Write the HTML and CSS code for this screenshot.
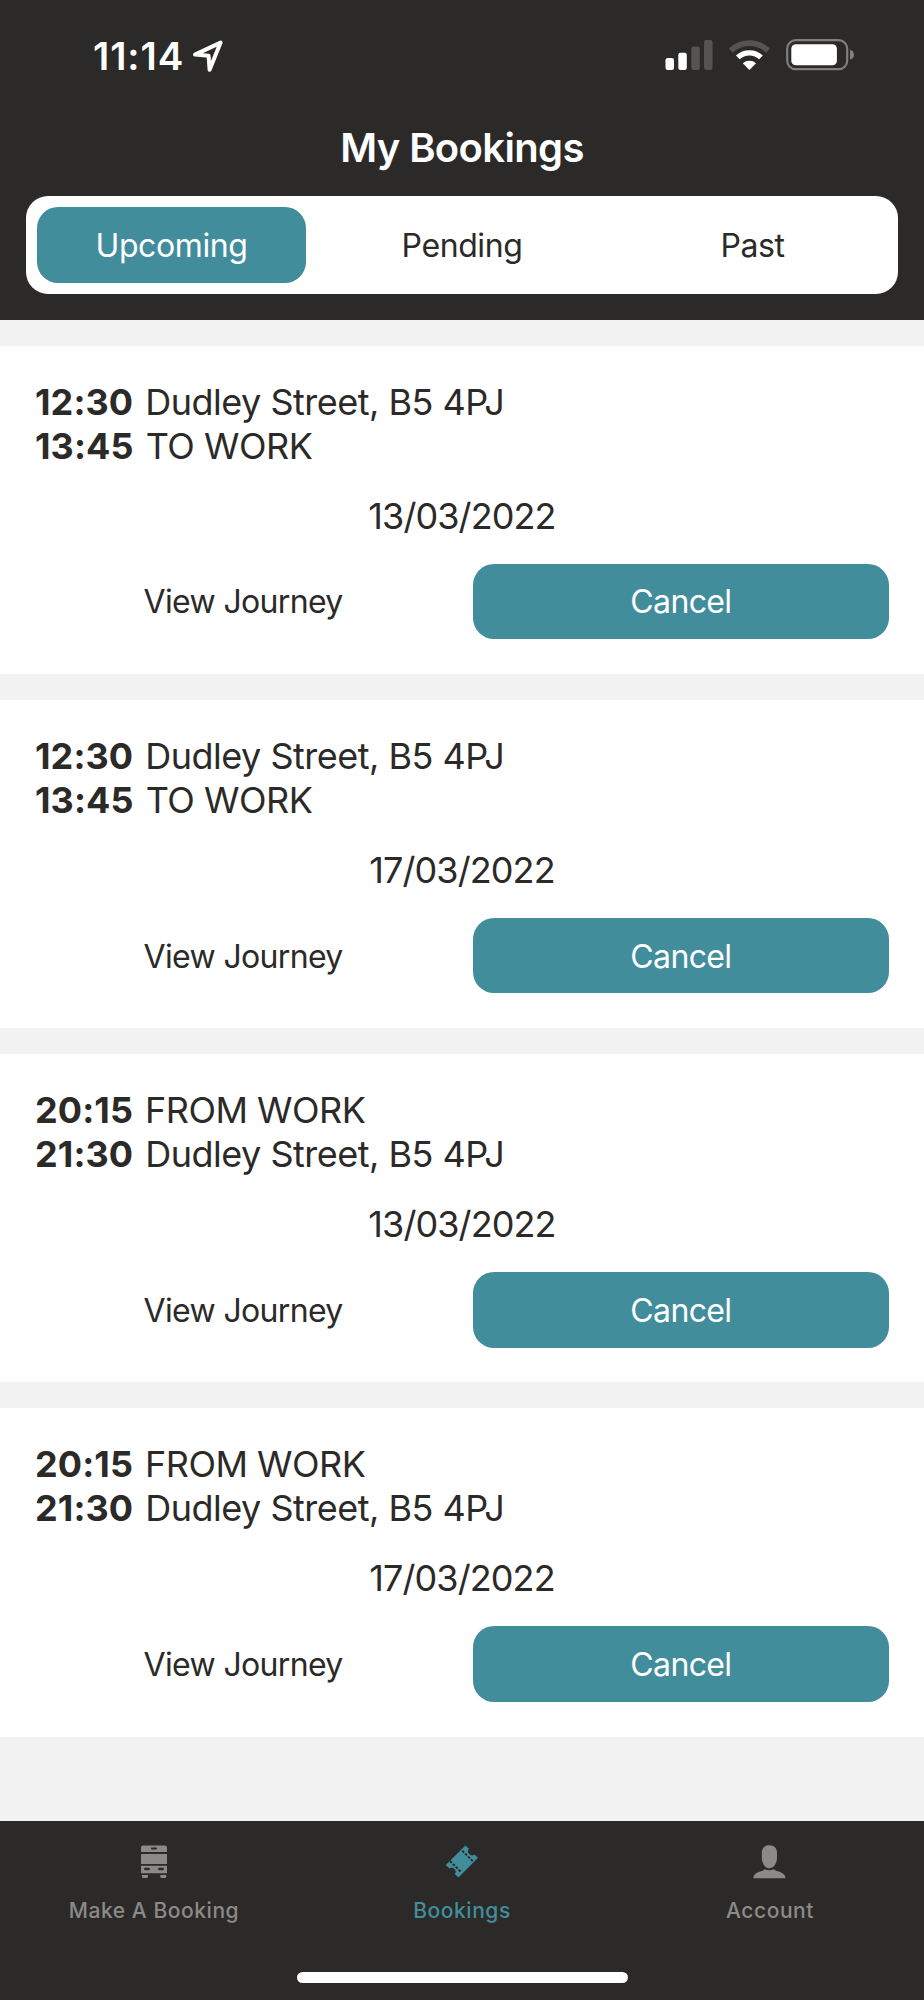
FILE: index.html
```html
<!DOCTYPE html>
<html lang="en">

<head>
  <meta charset="UTF-8">
  <meta name="viewport" content="width=device-width, initial-scale=1.0">
  <title>My Bookings</title>
  <link rel="stylesheet" href="styles.css">
</head>

<body>
  <header class="header">
    <div class="status-bar">
      <span class="time">11:14</span>
      <svg class="location" width="32" height="34" viewBox="0 0 32 34">
        <path d="M3 15.6 L28.6 3.6 L17.6 30.8 L16.6 16.8 Z" fill="none" stroke="#fff" stroke-width="4" stroke-linejoin="round" />
      </svg>
      <svg class="status-icons" width="190" height="34" viewBox="0 0 190 34">
        <!-- signal -->
        <rect x="0.5" y="19" width="8.5" height="12" rx="2.2" fill="#fff" />
        <rect x="13.3" y="13.7" width="8.5" height="17.3" rx="2.2" fill="#fff" />
        <rect x="26.3" y="7.5" width="8.5" height="23.5" rx="2.2" fill="#555453" />
        <rect x="39" y="1" width="8.5" height="30" rx="2.2" fill="#555453" />
        <!-- wifi -->
        <path d="M65.8 11.6 A27 27 0 0 1 103 11.6" fill="none" stroke="#555453" stroke-width="5.6" />
        <path d="M72.8 18.4 A17 17 0 0 1 96 18.4" fill="none" stroke="#fff" stroke-width="5.4" />
        <path d="M77.8 24.2 A10 10 0 0 1 91 24.2 L84.4 31 Z" fill="#fff" />
        <!-- battery -->
        <rect x="122.2" y="1.2" width="60" height="29" rx="8.5" fill="none" stroke="#807f7e" stroke-width="2.2" />
        <rect x="126.3" y="5.2" width="45.6" height="21" rx="4.5" fill="#fff" />
        <path d="M185 10.8 Q189 12 189 15.7 Q189 19.4 185 20.6 Z" fill="#807f7e" />
      </svg>
    </div>
    <h1>My Bookings</h1>
    <nav class="tabs">
      <button class="tab active">Upcoming</button>
      <button class="tab">Pending</button>
      <button class="tab">Past</button>
    </nav>
  </header>

  <main class="bookings">
    <section class="card">
      <div class="stop"><b>12:30</b><span>Dudley Street, B5 4PJ</span></div>
      <div class="stop"><b>13:45</b><span>TO WORK</span></div>
      <div class="date">13/03/2022</div>
      <div class="actions">
        <button class="btn">View Journey</button>
        <button class="btn btn-cancel">Cancel</button>
      </div>
    </section>
    <section class="card">
      <div class="stop"><b>12:30</b><span>Dudley Street, B5 4PJ</span></div>
      <div class="stop"><b>13:45</b><span>TO WORK</span></div>
      <div class="date">17/03/2022</div>
      <div class="actions">
        <button class="btn">View Journey</button>
        <button class="btn btn-cancel">Cancel</button>
      </div>
    </section>
    <section class="card">
      <div class="stop"><b>20:15</b><span>FROM WORK</span></div>
      <div class="stop"><b>21:30</b><span>Dudley Street, B5 4PJ</span></div>
      <div class="date">13/03/2022</div>
      <div class="actions">
        <button class="btn">View Journey</button>
        <button class="btn btn-cancel">Cancel</button>
      </div>
    </section>
    <section class="card">
      <div class="stop"><b>20:15</b><span>FROM WORK</span></div>
      <div class="stop"><b>21:30</b><span>Dudley Street, B5 4PJ</span></div>
      <div class="date">17/03/2022</div>
      <div class="actions">
        <button class="btn">View Journey</button>
        <button class="btn btn-cancel">Cancel</button>
      </div>
    </section>
  </main>

  <footer class="footer">
    <nav class="menu">
      <a class="menu-item">
        <svg width="34" height="34" viewBox="0 0 34 34" fill="currentColor">
          <path d="M6 0.5 H28 Q30 0.5 30 2.5 V7 H4 V2.5 Q4 0.5 6 0.5 Z M15 2.5 a1 1 0 0 0 0 2 h4 a1 1 0 0 0 0 -2 Z" fill-rule="evenodd" />
          <rect x="4" y="9" width="26" height="10" />
          <path d="M4 20.8 H30 V28.3 H4 Z M8.3 22.8 a1.2 1.2 0 0 0 0 2.4 h3.4 a1.2 1.2 0 0 0 0 -2.4 Z M22.3 22.8 a1.2 1.2 0 0 0 0 2.4 h3.4 a1.2 1.2 0 0 0 0 -2.4 Z" fill-rule="evenodd" />
          <path d="M5 30 H11 V31.5 Q11 33 9.5 33 H6.5 Q5 33 5 31.5 Z M23.3 30 H29.3 V31.5 Q29.3 33 27.8 33 H24.8 Q23.3 33 23.3 31.5 Z" />
        </svg>
        <span>Make A Booking</span>
      </a>
      <a class="menu-item active">
        <svg width="34" height="34" viewBox="0 0 34 34">
          <path d="M20.5 0.4 L24 3.8 A3.8 3.8 0 0 0 24.2 9 A3.8 3.8 0 0 0 29.4 9.4 L33 12.8 L13.5 32.6 L9.8 29.1 A3.8 3.8 0 0 0 9.4 24 A3.8 3.8 0 0 0 4.4 23.6 L0.7 20 Z" fill="currentColor" />
          <path d="M17.2 5.6 L28.6 17 M5 16 L16.6 27.6" fill="none" stroke="#2b2a28" stroke-width="2" stroke-dasharray="2.6 1.5" />
        </svg>
        <span>Bookings</span>
      </a>
      <a class="menu-item">
        <svg width="34" height="34" viewBox="0 0 34 34" fill="currentColor">
          <path d="M16.3 0.3 C21 0.3 24 3 24 8 V12.5 C24 18.5 20.5 23.3 16.3 23.3 C12.2 23.3 8.8 18.5 8.8 12.5 V8 C8.8 3 11.7 0.3 16.3 0.3 Z" />
          <path d="M11.8 24.3 Q16.3 26.2 20.8 24.3 C22.5 26 25 26.2 27.7 27.2 C30.5 28.3 32 30 32.6 33.2 H0.2 C0.8 30 2.2 28.3 5 27.2 C7.7 26.2 10.2 26 11.8 24.3 Z" />
        </svg>
        <span>Account</span>
      </a>
    </nav>
    <div class="home-indicator"></div>
  </footer>
</body>

</html>
```
FILE: styles.css
```css
* {
  box-sizing: border-box;
}

body {
  display: flex;
  flex-direction: column;
  height: 2000px;
  margin: 0;
  font-family: Inter, "Liberation Sans", sans-serif;
  color: #2b2a28;
  background-color: #f2f2f2;
}

button {
  margin: 0;
  padding: 2px 0 0;
  border: none;
  background: none;
  color: inherit;
  font-family: inherit;
  font-size: 32px;
  line-height: 40px;
  letter-spacing: -0.4px;
  white-space: nowrap;
}

/* Header */
.header {
  height: 319.6px;
  padding: 0 26px;
  background-color: #2b2a28;
  color: #fff;
}

.status-bar {
  display: flex;
  align-items: flex-start;
  height: 122px;
  padding: 32px 43px 0 67px;
}

.time {
  width: 99px;
  font-size: 38.5px;
  font-weight: 600;
  line-height: 48px;
  letter-spacing: 0.9px;
}

.location {
  margin-top: 7px;
}

.status-icons {
  margin-top: 7px;
  margin-left: auto;
}

h1 {
  margin: 0;
  height: 74.3px;
  font-size: 40px;
  font-weight: 600;
  line-height: 52px;
  letter-spacing: -0.65px;
  text-align: center;
}

.tabs {
  display: flex;
  gap: 21.5px;
  height: 97.4px;
  padding: 11px;
  border-radius: 22px;
  background-color: #fff;
  color: #2b2a28;
}

.tab {
  flex: 1;
  border-radius: 21px;
}

.tab.active {
  background-color: #428d9b;
  color: #fff;
}

/* Booking cards */
.bookings {
  display: flex;
  flex: 1;
  flex-direction: column;
  gap: 26px;
  padding-top: 26px;
}

.card {
  height: 328.3px;
  padding: 34px 35px;
  background-color: #fff;
}

.stop {
  display: flex;
  gap: 12px;
  font-size: 36px;
  line-height: 44px;
  letter-spacing: -0.5px;
}

.stop b {
  letter-spacing: 0.1px;
}

.date {
  margin-top: 26px;
  font-size: 36px;
  line-height: 44px;
  letter-spacing: -0.9px;
  text-align: center;
}

.actions {
  display: flex;
  gap: 21.5px;
  margin-top: 26px;
}

.btn {
  flex: 1;
  height: 75.6px;
  border-radius: 21px;
  letter-spacing: -0.65px;
}

.btn-cancel {
  background-color: #428d9b;
  color: #fff;
}

/* Bottom menu */
.footer {
  display: flex;
  flex-direction: column;
  align-items: center;
  height: 179.4px;
  background-color: #2b2a28;
}

.menu {
  display: flex;
  width: 100%;
  padding-top: 24px;
}

.menu-item {
  display: flex;
  flex: 1;
  flex-direction: column;
  align-items: center;
  gap: 18px;
  color: #8b8a88;
  font-size: 21px;
  font-weight: 500;
  line-height: 28px;
  letter-spacing: 0.55px;
}

.menu-item.active {
  color: #428d9b;
}

.home-indicator {
  width: 331px;
  height: 11px;
  margin-top: 47px;
  border-radius: 6px;
  background-color: #fff;
}
```
